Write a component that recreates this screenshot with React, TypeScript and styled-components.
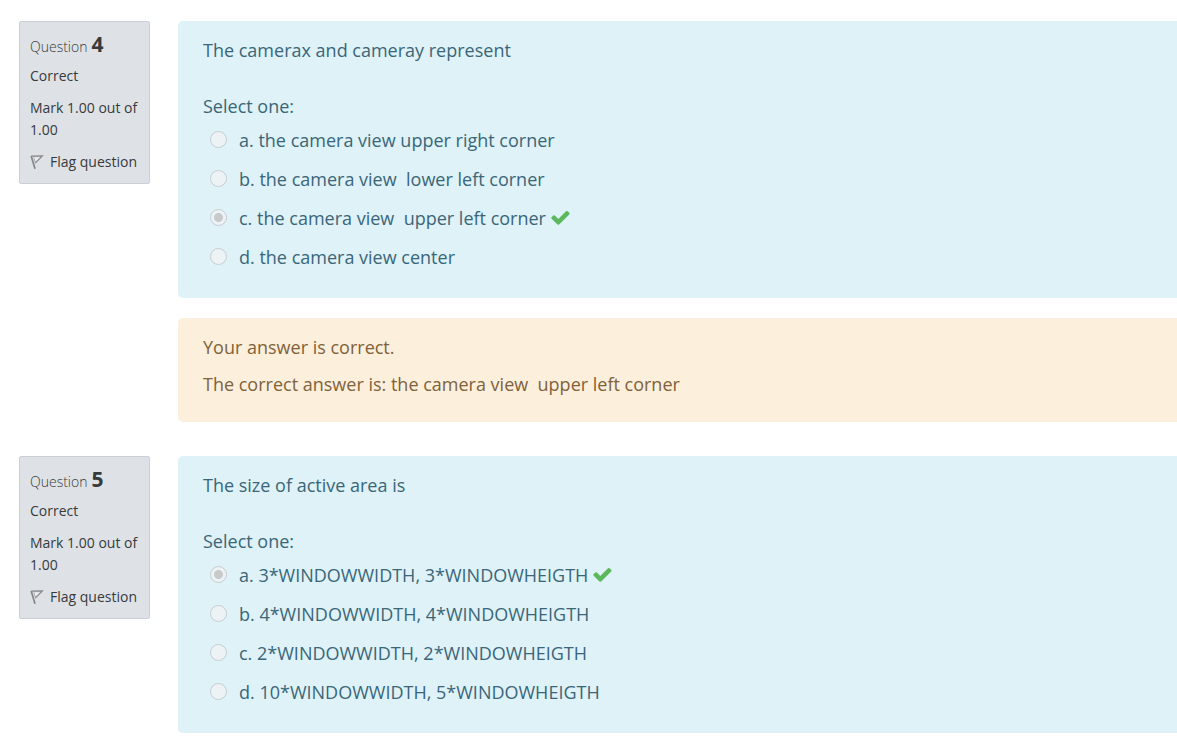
import React from "react";
import styled, { createGlobalStyle } from "styled-components";

const GlobalStyle = createGlobalStyle`
  *, *::before, *::after { box-sizing: border-box; }
  body {
    margin: 0;
    background: #fff;
    color: #373a3c;
    font-family: "Segoe UI", "Open Sans", "Noto Sans", sans-serif;
    font-size: 18px;
    line-height: 28px;
  }
`;

const Page = styled.main`
  display: flex;
  flex-direction: column;
  gap: 34px;
  padding: 21px 0 7px 19px;
`;

const QuestionRow = styled.section`
  display: grid;
  grid-template-columns: 131px minmax(0, 1fr);
  column-gap: 28px;
  align-items: start;
`;

const Info = styled.aside`
  display: flex;
  flex-direction: column;
  gap: 10px;
  padding: 11px 0 10px 10px;
  background: #dee2e6;
  border: 1px solid #cad0d7;
  border-radius: 2px;
  font-size: 14px;
  line-height: 22px;
`;

const InfoHeading = styled.h3`
  display: flex;
  align-items: baseline;
  gap: 4px;
  height: 22px;
  margin: 0;
  font-size: 14px;
  font-weight: 300;
`;

const QuestionNumber = styled.span`
  font-size: 21px;
  font-weight: 700;
`;

const InfoText = styled.div``;

const FlagButton = styled.button`
  display: flex;
  align-items: center;
  gap: 6px;
  padding: 0;
  border: 0;
  background: none;
  color: inherit;
  font: inherit;
  white-space: nowrap;
  cursor: pointer;
`;

const Content = styled.div`
  display: flex;
  flex-direction: column;
  gap: 20px;
`;

const Formulation = styled.div`
  padding: 15px 25px 22px;
  background: #def2f8;
  border-radius: 5px 0 0 5px;
  color: #3a6678;
`;

const Prompt = styled.p`
  margin: 0 0 28px;
`;

const Answers = styled.fieldset`
  margin: 0;
  padding: 0;
  border: 0;
  min-width: 0;
`;

const Legend = styled.legend`
  padding: 0;
`;

const Option = styled.div`
  display: flex;
  align-items: center;
  height: 39px;
  padding-left: 7px;
`;

const Radio = styled.input`
  appearance: none;
  flex: none;
  width: 17px;
  height: 17px;
  margin: 0 12px 1px 0;
  border: 1px solid #c6cdd1;
  border-radius: 50%;
  background: #edf2f5;

  &:checked {
    background: radial-gradient(circle, #c8c9cb 4px, #edf2f5 5px);
  }
`;

const OptionLabel = styled.label`
  white-space: pre-wrap;
`;

const Feedback = styled.div`
  display: flex;
  flex-direction: column;
  gap: 9px;
  padding: 15px 25px 24px;
  background: #fcefdc;
  border-radius: 5px 0 0 5px;
  color: #80623a;
`;

const FeedbackLine = styled.p`
  margin: 0;
  white-space: pre-wrap;
`;

const CheckSvg = styled.svg`
  flex: none;
  margin-left: 5px;
`;

const FlagIcon = () => (
  <svg width="14" height="16" viewBox="0 0 14 16" fill="none" aria-hidden="true">
    <path d="M1.2 2 5 14.8" stroke="#858789" strokeWidth="1.7" />
    <path d="M1.3 2.2 12.4 1.8 L5.2 9.1" stroke="#858789" strokeWidth="1.2" />
    <path d="M4 3.6 5.4 8.2" stroke="#9a9c9f" strokeWidth="1" />
    <path d="M4.4 4 8.9 3.7 5.6 7.2Z" fill="#eceef0" />
  </svg>
);

const CheckIcon = () => (
  <CheckSvg width="21" height="21" viewBox="90 0 1792 1792" role="img" aria-label="Correct">
    <path
      fill="#5cb85c"
      d="M1671 566q0 40-28 68l-724 724-136 136q-28 28-68 28t-68-28l-136-136-362-362q-28-28-28-68t28-68l136-136q28-28 68-28t68 28l294 295 656-657q28-28 68-28t68 28l136 136q28 28 28 68z"
    />
  </CheckSvg>
);

interface QuestionData {
  number: number;
  prompt: string;
  options: string[];
  selected: number;
  feedback?: string[];
}

const questions: QuestionData[] = [
  {
    number: 4,
    prompt: "The camerax and cameray represent",
    options: [
      "a. the camera view upper right corner",
      "b. the camera view  lower left corner",
      "c. the camera view  upper left corner",
      "d. the camera view center",
    ],
    selected: 2,
    feedback: [
      "Your answer is correct.",
      "The correct answer is: the camera view  upper left corner",
    ],
  },
  {
    number: 5,
    prompt: "The size of active area is",
    options: [
      "a. 3*WINDOWWIDTH, 3*WINDOWHEIGTH",
      "b. 4*WINDOWWIDTH, 4*WINDOWHEIGTH",
      "c. 2*WINDOWWIDTH, 2*WINDOWHEIGTH",
      "d. 10*WINDOWWIDTH, 5*WINDOWHEIGTH",
    ],
    selected: 0,
  },
];

const Question = ({ number, prompt, options, selected, feedback }: QuestionData) => (
  <QuestionRow>
    <Info>
      <InfoHeading>
        Question <QuestionNumber>{number}</QuestionNumber>
      </InfoHeading>
      <InfoText>Correct</InfoText>
      <InfoText>Mark 1.00 out of 1.00</InfoText>
      <FlagButton type="button">
        <FlagIcon />
        Flag question
      </FlagButton>
    </Info>
    <Content>
      <Formulation>
        <Prompt>{prompt}</Prompt>
        <Answers>
          <Legend>Select one:</Legend>
          {options.map((option, index) => {
            const id = `q${number}-${index}`;
            return (
              <Option key={id}>
                <Radio
                  type="radio"
                  id={id}
                  name={`q${number}`}
                  defaultChecked={index === selected}
                  disabled
                />
                <OptionLabel htmlFor={id}>{option}</OptionLabel>
                {index === selected && <CheckIcon />}
              </Option>
            );
          })}
        </Answers>
      </Formulation>
      {feedback && (
        <Feedback>
          {feedback.map((line) => (
            <FeedbackLine key={line}>{line}</FeedbackLine>
          ))}
        </Feedback>
      )}
    </Content>
  </QuestionRow>
);

export default function App() {
  return (
    <>
      <GlobalStyle />
      <Page>
        {questions.map((question) => (
          <Question key={question.number} {...question} />
        ))}
      </Page>
    </>
  );
}
